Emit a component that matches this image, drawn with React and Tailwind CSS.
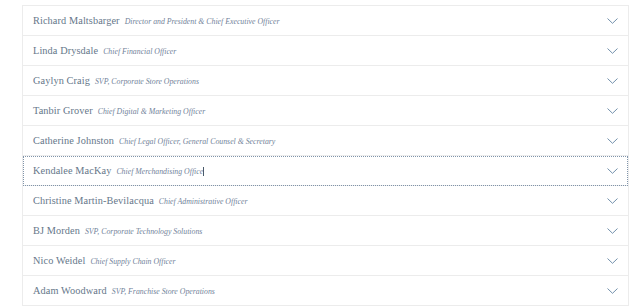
import React from "react";

const people = [
  ["Richard Maltsbarger", "Director and President & Chief Executive Officer"],
  ["Linda Drysdale", "Chief Financial Officer"],
  ["Gaylyn Craig", "SVP, Corporate Store Operations"],
  ["Tanbir Grover", "Chief Digital & Marketing Officer"],
  ["Catherine Johnston", "Chief Legal Officer, General Counsel & Secretary"],
  ["Kendalee MacKay", "Chief Merchandising Office", true],
  ["Christine Martin-Bevilacqua", "Chief Administrative Officer"],
  ["BJ Morden", "SVP, Corporate Technology Solutions"],
  ["Nico Weidel", "Chief Supply Chain Officer"],
  ["Adam Woodward", "SVP, Franchise Store Operations"],
];

function Chevron() {
  return (
    <svg width="11" height="6" viewBox="0 0 11 6" fill="none" className="shrink-0">
      <path d="M0.5 0.5 L5.5 5.3 L10.5 0.5" stroke="#7290ab" strokeWidth="1" />
    </svg>
  );
}

export default function App() {
  return (
    <div className="w-[640px] h-[308px] bg-white overflow-hidden pt-[5px] pl-[22px] pr-[11px]" style={{ fontFamily: '"Liberation Serif", "DejaVu Serif", serif' }}>
      <div className="border border-[#ececec] border-b-0">
        {people.map(([name, title, focused], i) => (
          <div
            key={i}
            className={
              "h-[30px] flex items-center justify-between pl-[10px] pr-[10px] " +
              (focused
                ? "outline outline-1 outline-dotted outline-[#8094aa] -outline-offset-1 border-b border-[#ececec]"
                : "border-b border-[#ececec]")
            }
          >
            <div className="flex items-baseline gap-[5px]">
              <span className="text-[10.3px] tracking-[0.1px] text-[#66778a]">{name}</span>
              <span className="text-[7.8px] italic text-[#72839a]">
                {title}
                {focused && <span className="inline-block w-px h-[9px] bg-[#4a5a6a] align-middle" />}
              </span>
            </div>
            <Chevron />
          </div>
        ))}
      </div>
    </div>
  );
}
